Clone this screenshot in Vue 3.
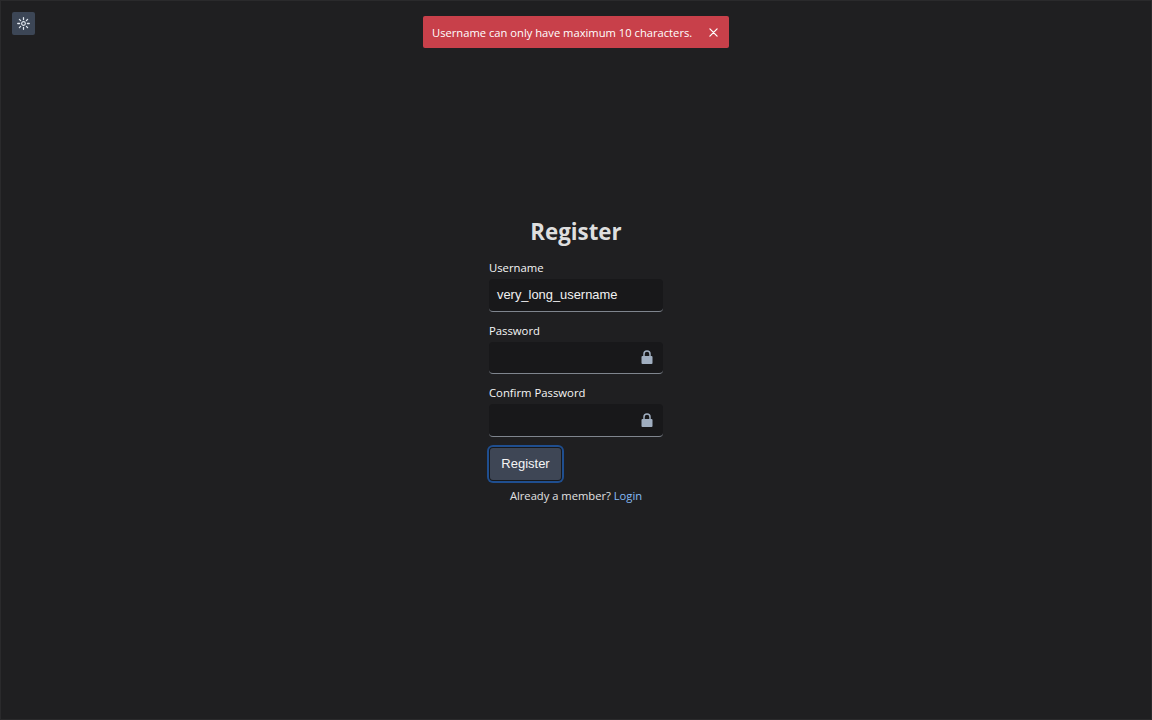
<script setup>
const fields = [
  { label: 'Username', value: 'very_long_username', lock: false },
  { label: 'Password', value: '', lock: true },
  { label: 'Confirm Password', value: '', lock: true },
]
</script>

<template>
  <div class="page">
    <button class="theme" aria-label="theme">
      <svg width="13" height="13" viewBox="0 0 14 14" fill="none" stroke="#e2e8f0" stroke-width="1.4" stroke-linecap="round">
        <circle cx="7" cy="7" r="2" stroke-width="1.2" />
        <path d="M7 .8v2M7 11.2v2M.8 7h2M11.2 7h2M2.6 2.6l1.3 1.3M10.1 10.1l1.3 1.3M2.6 11.4l1.3-1.3M10.1 3.9l1.3-1.3" />
      </svg>
    </button>

    <div class="toast">
      <span class="toast-text">Username can only have maximum 10 characters.</span>
      <svg class="close" width="9" height="9" viewBox="0 0 10 10" stroke="#fff" stroke-width="1.4" stroke-linecap="round">
        <path d="M1 1l8 8M9 1l-8 8" />
      </svg>
    </div>

    <main class="form">
      <h1 class="title">Register</h1>
      <div v-for="f in fields" :key="f.label" class="field">
        <label class="label">{{ f.label }}</label>
        <div class="input">
          <span class="value">{{ f.value }}</span>
          <svg v-if="f.lock" width="12" height="14" viewBox="0 0 12 14">
            <path d="M3 6.5V4a3 3 0 0 1 6 0v2.5" fill="none" stroke="#a0aec0" stroke-width="1.5" />
            <rect x="0.5" y="6" width="11" height="8" rx="1" fill="#a0aec0" />
          </svg>
        </div>
      </div>
      <button class="submit">Register</button>
      <p class="foot">Already a member? <a class="link">Login</a></p>
    </main>
  </div>
</template>

<style>
html, body { margin: 0; background: #1f1f21; }
</style>

<style scoped>
.page {
  box-sizing: border-box;
  position: relative;
  height: 720px;
  background: #1f1f21;
  border: 1px solid #2a2a2c;
  font-family: "Open Sans", sans-serif;
  color: #e7e7e7;
}
.theme {
  position: absolute;
  left: 11px;
  top: 11px;
  width: 22.5px;
  height: 22.5px;
  padding: 0;
  border: 0;
  border-radius: 2px;
  background: #3c4656;
  display: flex;
  align-items: center;
  justify-content: center;
}
.toast {
  position: absolute;
  left: 422px;
  top: 15px;
  box-sizing: border-box;
  width: 306px;
  height: 32px;
  padding: 0 10px 0 9px;
  display: flex;
  align-items: center;
  justify-content: space-between;
  background: #c8404a;
  border-radius: 2px;
  color: #fff;
  font-size: 11.2px;
}
.toast-text { white-space: nowrap; }
.close { margin-right: 1px; }
.form {
  position: absolute;
  left: 488px;
  top: 216px;
  width: 174px;
  display: flex;
  flex-direction: column;
}
.title {
  margin: 0 0 13px;
  height: 30px;
  line-height: 30px;
  font-size: 22.3px;
  font-weight: 700;
  text-align: center;
  color: #dedede;
}
.field { margin-bottom: 11px; }
.label {
  display: block;
  height: 16px;
  line-height: 16px;
  margin-bottom: 3px;
  font-size: 11.3px;
  color: #f6f6f6;
}
.input {
  box-sizing: border-box;
  height: 32.5px;
  padding: 0 10px 0 8px;
  display: flex;
  align-items: center;
  justify-content: space-between;
  background: #18181a;
  border-radius: 4px;
  border-bottom: 1px solid #7f858e;
}
.value {
  font-family: "Liberation Sans", sans-serif;
  font-size: 12.9px;
  color: #f2f2f2;
}
.submit {
  box-sizing: border-box;
  width: 71px;
  height: 32px;
  margin: 0 0 0 1px;
  padding: 0;
  background: #3e4655;
  border: 0;
  border-radius: 3px;
  box-shadow: 0 0 0 1px #17181a, 0 0 0 3px #1f4e8f;
  font-family: "Liberation Sans", sans-serif;
  font-size: 13px;
  color: #f5f5f5;
}
.foot {
  margin: 8px 0 0;
  height: 16px;
  line-height: 16px;
  font-size: 11.2px;
  text-align: center;
  color: #e2e2e2;
}
.link { color: #86baf4; }
</style>
